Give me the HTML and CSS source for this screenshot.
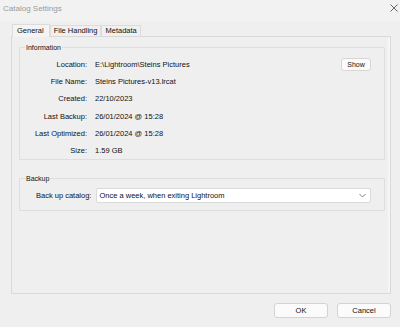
FILE: index.html
```html
<!DOCTYPE html>
<html lang="en">
  <head>
    <meta charset="UTF-8" />
    <title>Catalog Settings</title>
    <link rel="stylesheet" href="styles.css">
  </head>
  <body>
    <div class="titlebar">
      <span class="title">Catalog Settings</span>
      <svg class="close" width="8" height="8" viewBox="0 0 8 8">
        <path d="M0.5 0.5 L7.5 7.5 M7.5 0.5 L0.5 7.5" stroke="#555" stroke-width="0.9" fill="none" />
      </svg>
    </div>

    <div class="dialog">
      <div class="tabs">
        <div class="tab active">General</div>
        <div class="tab">File Handling</div>
        <div class="tab">Metadata</div>
      </div>

      <div class="panel">
        <fieldset class="group info">
          <legend>Information</legend>
          <div class="rows">
            <span class="label">Location:</span>
            <span class="value">E:\Lightroom\Steins Pictures</span>
            <button class="small-btn">Show</button>

            <span class="label">File Name:</span>
            <span class="value">Steins Pictures-v13.lrcat</span>
            <span></span>

            <span class="label">Created:</span>
            <span class="value">22/10/2023</span>
            <span></span>

            <span class="label">Last Backup:</span>
            <span class="value">26/01/2024 @ 15:28</span>
            <span></span>

            <span class="label">Last Optimized:</span>
            <span class="value">26/01/2024 @ 15:28</span>
            <span></span>

            <span class="label">Size:</span>
            <span class="value">1.59 GB</span>
            <span></span>
          </div>
        </fieldset>

        <fieldset class="group backup">
          <legend>Backup</legend>
          <div class="backup-row">
            <span class="label">Back up catalog:</span>
            <div class="select">
              <span>Once a week, when exiting Lightroom</span>
              <svg width="7" height="5" viewBox="0 0 7 5">
                <path d="M0.5 1 L3.5 4 L6.5 1" stroke="#777" stroke-width="0.9" fill="none" />
              </svg>
            </div>
          </div>
        </fieldset>
      </div>

      <div class="actions">
        <button class="btn">OK</button>
        <button class="btn">Cancel</button>
      </div>
    </div>
  </body>
</html>
```

FILE: styles.css
```css
body {
  margin: 0;
  background: #efefef;
  font-family: "Liberation Sans", Arial, sans-serif;
  font-size: 7.5px;
  color: #111;
  height: 327px;
  overflow: hidden;
}
.titlebar {
  height: 17px;
  display: flex;
  align-items: center;
  justify-content: space-between;
  padding: 0 2px 4px 3px;
  background: #f2f2f2;
}
.title {
  font-size: 8px;
  color: #9a9a9a;
}
.close {
  margin-top: -2px;
}
.dialog {
  padding: 0 9px 0 11px;
}
.tabs {
  display: flex;
  align-items: flex-end;
  height: 13px;
  margin-top: 2px;
  padding-left: 1px;
}
.tab {
  height: 10px;
  padding: 0 3px;
  line-height: 10px;
  border: 1px solid #dcdcdc;
  border-bottom: none;
  background: #f0f0f0;
  color: #111;
}
.tab.active {
  height: 12px;
  line-height: 11px;
  padding: 0 5px 0 4px;
  background: #f4f4f4;
  position: relative;
  top: 1px;
}
.panel {
  height: 256px;
  border: 1px solid #d9d9d9;
  box-shadow: inset -2px 0 0 #f6f6f6;
  padding: 0 5px 0 7px;
}
.group {
  margin: 6px 0 0;
  padding: 0;
  border: 1px solid #dedede;
  border-radius: 1px;
}
.group legend {
  font-size: 7px;
  padding: 0 1px;
  margin-left: 5px;
  line-height: 9px;
}
.rows {
  display: grid;
  grid-template-columns: 67px 1fr auto;
  column-gap: 8px;
  row-gap: 4.2px;
  align-items: center;
  padding: 6px 13px 2px 0;
}
.rows > span {
  height: 13px;
  line-height: 13px;
}
.label {
  text-align: right;
}
.small-btn {
  width: 30px;
  height: 13px;
  padding: 0;
  font-family: inherit;
  font-size: 7px;
  color: #111;
  background: #fbfbfb;
  border: 1px solid #d6d6d6;
  border-radius: 3px;
}
.backup {
  margin-top: 14px;
}
.backup-row {
  display: flex;
  align-items: center;
  gap: 5px;
  padding: 5px 13px 7px 16px;
}
.select {
  flex: 1;
  height: 13px;
  display: flex;
  align-items: center;
  justify-content: space-between;
  padding: 0 4px 0 2px;
  background: #fff;
  border: 1px solid #dadada;
  border-radius: 2px;
}
.actions {
  display: flex;
  justify-content: flex-end;
  gap: 9px;
  margin-top: 9px;
}
.btn {
  width: 54px;
  height: 15px;
  padding: 0;
  font-family: inherit;
  font-size: 7.5px;
  color: #111;
  background: #fbfbfb;
  border: 1px solid #d3d3d3;
  border-radius: 3px;
}
```
